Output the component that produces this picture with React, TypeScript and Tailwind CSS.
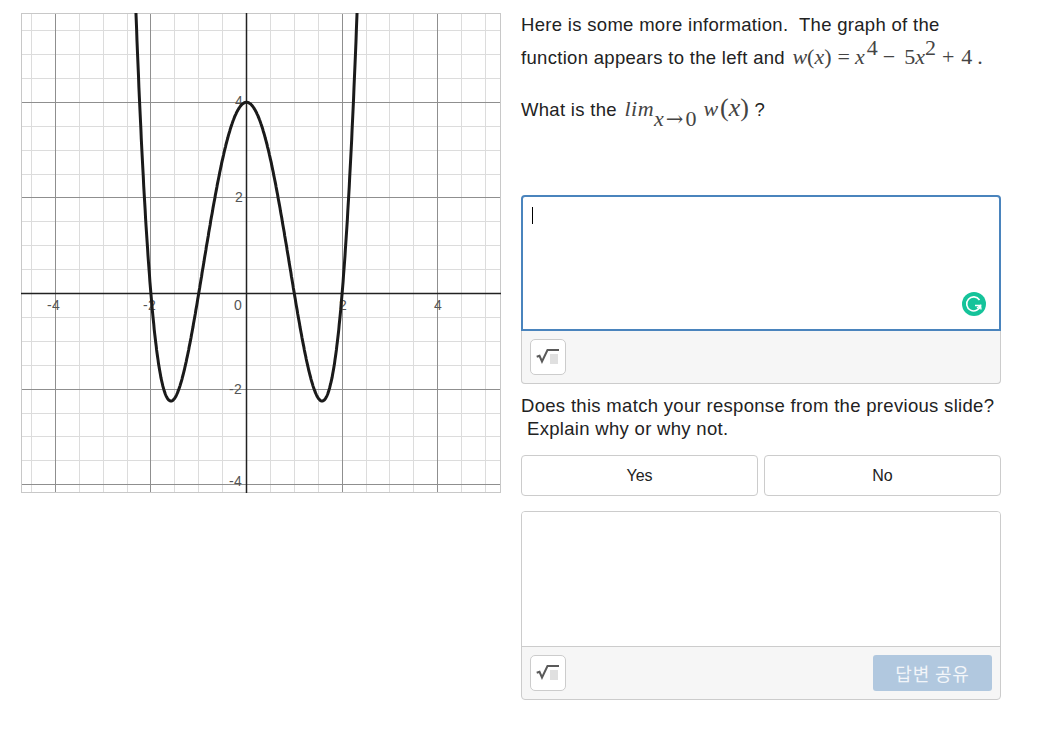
import React from 'react';

const originX = 225.5;
const originY = 280.5;
const unit = 47.8;

const snap = (v: number) => Math.floor(v) + 0.5;

function Graph() {
    const steps = Array.from({ length: 25 }, (_, i) => i - 12);
    const curve: string[] = [];
    for (let x = -2.36; x <= 2.36; x += 0.01) {
        const y = x * x * x * x - 5 * x * x + 4;
        curve.push(`${(originX + x * unit).toFixed(1)},${(originY - y * unit).toFixed(1)}`);
    }

    return (
        <svg width="480" height="480" viewBox="0 0 480 480" className="block">
            {steps.filter((k) => k % 4 !== 0).map((k) => {
                const x = snap(originX + k * unit / 2);
                const y = snap(originY - k * unit / 2);
                return (
                    <g key={k}>
                        {x > 0 && x < 480 && <line x1={x} y1="0" x2={x} y2="480" stroke="#dcdcdc" />}
                        {y > 0 && y < 480 && <line x1="0" y1={y} x2="480" y2={y} stroke="#dcdcdc" />}
                    </g>
                );
            })}
            {steps.filter((k) => k % 4 === 0 && k !== 0).map((k) => {
                const x = snap(originX + k * unit / 2);
                const y = snap(originY - k * unit / 2);
                return (
                    <g key={k}>
                        {x > 0 && x < 480 && <line x1={x} y1="0" x2={x} y2="480" stroke="#8f8f8f" />}
                        {y > 0 && y < 480 && <line x1="0" y1={y} x2="480" y2={y} stroke="#8f8f8f" />}
                    </g>
                );
            })}
            <rect x="0.5" y="0.5" width="479" height="479" fill="none" stroke="#c8c8c8" />
            <line x1="225.5" y1="0" x2="225.5" y2="480" stroke="#222222" strokeWidth="1.5" />
            <line x1="0" y1="280.5" x2="480" y2="280.5" stroke="#222222" strokeWidth="1.5" />
            <g fontFamily='"Liberation Sans", Arial, sans-serif' fontSize="14" fill="#555555">
                <text x="26" y="297">-4</text>
                <text x="122" y="297">-2</text>
                <text x="213" y="297">0</text>
                <text x="318" y="297">2</text>
                <text x="413" y="297">4</text>
                <text x="214" y="93">4</text>
                <text x="214" y="189">2</text>
                <text x="208" y="381">-2</text>
                <text x="208" y="473">-4</text>
            </g>
            <polyline points={curve.join(' ')} fill="none" stroke="#1a1a1a" strokeWidth="3" />
        </svg>
    );
}

function SqrtButton() {
    return (
        <button className="flex h-[36px] w-[36px] items-center justify-center rounded-[5px] border border-[#cccccc] bg-white">
            <svg width="24" height="18" viewBox="0 0 24 18">
                <rect x="14" y="6" width="8" height="10" fill="#e0e0e0" />
                <path d="M0.7 8.7 L3.5 7.8 L6 13.5 L11.5 2 H23" fill="none" stroke="#5a5a5a" strokeWidth="2" />
            </svg>
        </button>
    );
}

function GrammarlyBadge() {
    return (
        <div className="absolute right-[13px] bottom-[13px] h-[24px] w-[24px]">
            <svg width="24" height="24" viewBox="0 0 24 24">
                <circle cx="12" cy="12" r="12" fill="#15c39a" />
                <path d="M17.5 8 A7 7 0 1 0 18.5 13.5 H13" fill="none" stroke="#ffffff" strokeWidth="1.6" />
                <path d="M15 16 L18.5 13.5 L19 17.5" fill="none" stroke="#ffffff" strokeWidth="1.4" />
            </svg>
        </div>
    );
}

function M({ children, className = '' }: { children: React.ReactNode; className?: string }) {
    return <span className={`font-['Liberation_Serif',serif] tracking-normal ${className}`}>{children}</span>;
}

export default function App() {
    return (
        <div className="flex min-h-screen gap-5 bg-white pt-[13px] pl-[21px] font-['Liberation_Sans',Arial,sans-serif] text-[18.5px] tracking-[0.31px] text-[#222222]">
            <div className="h-[480px] w-[480px] shrink-0">
                <Graph />
            </div>
            <div className="w-[480px] shrink-0">
                <p className="h-[24px] leading-[24px] whitespace-pre">Here is some more information.  The graph of the</p>
                <p className="mt-[8px] h-[24px] leading-[24px] whitespace-pre">
                    function appears to the left and{' '}
                    <M className="ml-[2px] text-[22px] text-[#444444]">
                        <i>w</i>(<i>x</i>)<span className="mr-[5px] ml-[6px]">=</span><i>x</i>
                        <span className="relative -top-[9px] ml-[2px] text-[22px]">4</span>
                        <span className="mr-[9px] ml-[5px]">−</span>5<i>x</i>
                        <span className="relative -top-[9px] text-[22px]">2</span>
                        <span className="mr-[7px] ml-[6px]">+</span>4<span className="ml-[5px]">.</span>
                    </M>
                </p>
                <p className="mt-[27px] h-[24px] leading-[24px] whitespace-pre">
                    What is the{' '}
                    <M className="ml-[2px] text-[22px] text-[#444444]">
                        <i className="tracking-[0.5px]">lim</i>
                        <span className="relative top-[10px] text-[22px]">
                            <i>x</i><span className="mx-[2px] font-['DejaVu_Serif',serif] text-[21px]">→</span>0
                        </span>
                        <span className="ml-[7px]"><i>w</i></span>
                        <span className="ml-[2px] text-[26px]">(<i>x</i>)</span>
                    </M>
                    {' ?'}
                </p>
                <div className="mt-[75px] h-[189px] rounded-[4px] bg-[#f6f6f6]">
                    <div className="relative h-[136px] rounded-t-[4px] border-2 border-[#4a84bd] bg-white">
                        <div className="mt-[10px] ml-[9px] h-[17px] w-px bg-black" />
                        <GrammarlyBadge />
                    </div>
                    <div className="h-[53px] rounded-b-[4px] border border-t-0 border-[#cccccc] pt-[8px] pl-[8px]">
                        <SqrtButton />
                    </div>
                </div>
                <p className="mt-[10px] h-[23px] leading-[23px]">Does this match your response from the previous slide?</p>
                <p className="h-[23px] pl-[6px] leading-[23px]">Explain why or why not.</p>
                <div className="mt-[15px] flex gap-[6px] tracking-normal">
                    <button className="h-[41px] w-[237px] rounded-[4px] border border-[#cccccc] bg-white text-[16px]">Yes</button>
                    <button className="h-[41px] w-[237px] rounded-[4px] border border-[#cccccc] bg-white text-[16px]">No</button>
                </div>
                <div className="mt-[15px] h-[189px] overflow-hidden rounded-[4px] border border-[#cccccc] bg-[#f6f6f6]">
                    <div className="h-[135px] border-b border-[#cccccc] bg-white" />
                    <div className="flex items-center justify-between px-[8px] pt-[8px]">
                        <SqrtButton />
                        <button className="h-[36px] w-[119px] rounded-[3px] bg-[#b1c8df] font-['Noto_Sans_CJK_KR',sans-serif] text-[18px] tracking-[0.8px] text-[#f2f5f9]">답변 공유</button>
                    </div>
                </div>
            </div>
        </div>
    );
}
